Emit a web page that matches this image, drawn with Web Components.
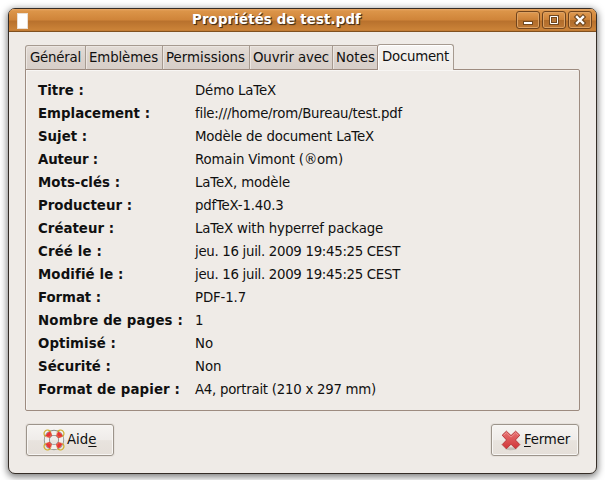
<!DOCTYPE html>
<html lang="fr"><head><meta charset="utf-8"><title>Propriétés de test.pdf</title>
<style>
html,body{margin:0;background:#fff}
body{width:605px;height:480px;overflow:hidden;font:13.33px/23px "DejaVu Sans",sans-serif;color:#101010}
</style></head><body>
<prop-window></prop-window>
<script>
const make=(name,html,init)=>customElements.define(name,class extends HTMLElement{
  connectedCallback(){
    if(this.shadowRoot)return;
    this.attachShadow({mode:'open'}).innerHTML=html;
    if(init)init(this);
  }
});

/* Text run whose tracking is tuned to fill the width given in "w". */
make('fit-text',`<style>:host{display:inline-block;white-space:pre}</style><span><slot></slot></span>`,el=>{
  const w=+el.getAttribute('w');
  if(!w)return;
  const n=[...el.textContent].length;
  const now=el.shadowRoot.querySelector('span').getBoundingClientRect().width;
  el.style.letterSpacing=((w-now)/n)+'px';
});

make('win-button',`<style>
:host{display:block;box-sizing:border-box;width:24px;height:18px;border:1px solid #70441d;border-radius:3px;background:linear-gradient(#df9a51,#cd8238 48%,#b06c2a 50%,#bd7835);box-shadow:inset 0 0 0 1px #dda263}
svg{display:block;width:22px;height:16px}
</style><svg viewBox="0 0 22 16"></svg>`,el=>{
  const k={
    min:'<path d="M6 9h10v4H6z" fill="#714820"/><path d="M7 10h8v2H7z" fill="#fff"/>',
    max:'<path d="M6 3h10v10H6z" fill="#714820"/><path d="M7.5 4.5h7v7h-7z" fill="none" stroke="#fff"/><path d="M9 6h4v4H9z" fill="#b9783a"/>',
    close:'<path d="M8 5l6 6M14 5l-6 6" stroke="#714820" stroke-width="4.6" stroke-linecap="square"/><path d="M8 5l6 6M14 5l-6 6" stroke="#fff" stroke-width="2.4" stroke-linecap="square"/>'};
  el.shadowRoot.querySelector('svg').innerHTML=k[el.getAttribute('kind')];
});

make('title-bar',`<style>
:host{display:grid;grid-template-columns:28px 1fr 80px;height:23px;box-sizing:border-box;border-bottom:1px solid #80501f;background:linear-gradient(#e8a766 0,#dc9549 2px,#cf8439 11px,#b8712d 12px,#cb8338 21px,#b97431);border-radius:5px 5px 0 0}
i{display:block;width:11px;height:16px;margin:4px 0 0 8px;box-sizing:border-box;background:#fff;border:1px solid #eadfd3}
.t{text-align:center;font-weight:bold;color:#fff;line-height:21px;text-shadow:1px 1px 1px #4a3018,1px 1px #5a3c1d}
.b{display:flex;gap:2px;padding-top:2px}
</style><i></i><div class="t"><slot></slot></div><div class="b"><win-button kind="min"></win-button><win-button kind="max"></win-button><win-button kind="close"></win-button></div>`);

make('tab-item',`<style>
:host{display:block;box-sizing:border-box;height:25px;line-height:23px;padding-left:3px;border:solid #a69a90;border-width:1px 1px 1px 0;border-bottom-color:#9d8b80;background:linear-gradient(#e3dcd6,#dbd3cd 50%,#d7cec8);box-shadow:inset 1px 1px #ece6e1}
:host([first]){padding-left:4px;border-left-width:1px;border-top-left-radius:3px}
:host([last]){border-right:0}
:host([active]){position:relative;height:26px;line-height:24px;padding-left:4px;border-bottom:0;border-left:1px solid #9d8b80;border-radius:3px 3px 0 0;background:linear-gradient(#f7f5f3,#efebe7);box-shadow:inset 1px 1px #fff}
</style><slot></slot>`);

make('prop-row',`<style>
:host{display:grid;grid-template-columns:157px 1fr;height:23px}
b{font-weight:bold}
</style><b><slot name="k"></slot></b><span><slot></slot></span>`);

make('push-button',`<style>
:host{display:flex;align-items:center;box-sizing:border-box;height:32px;border:1px solid #9c948b;border-radius:3px;background:linear-gradient(#f6f4f2,#efece9 50%,#e8e3de 52%,#e5dfd9);box-shadow:inset 0 0 0 1px #f8f6f4,0 0 0 1px #e6e1dc}
</style><slot name="icon"></slot><slot></slot>`);

make('help-icon',`<style>:host{display:block;width:22px;height:22px}svg{display:block}</style>
<svg width="22" height="22" viewBox="0 0 22 22" fill="none">
<circle cx="11" cy="11" r="7.2" stroke="#8a8a86" stroke-width="6"/>
<circle cx="11" cy="11" r="7.2" stroke="#f1f1ef" stroke-width="4.3"/>
<circle cx="11" cy="11" r="7.1" stroke="#ea3338" stroke-width="4.6" stroke-dasharray="5.2 5.95" stroke-dashoffset="-2.98"/>
<g stroke="#cfae2a" stroke-width="1.2"><path d="M7.6 2.6A3.6 3.6 0 1 0 2.6 7.6M14.4 2.6A3.6 3.6 0 1 1 19.4 7.6M7.6 19.4A3.6 3.6 0 1 1 2.6 14.4M14.4 19.4A3.6 3.6 0 1 0 19.4 14.4"/></g>
<g stroke="#d98a45" stroke-width=".8" opacity=".7"><path d="M7.6 2.6A3.6 3.6 0 0 1 2.6 7.6M14.4 2.6A3.6 3.6 0 0 0 19.4 7.6M7.6 19.4A3.6 3.6 0 0 0 2.6 14.4M14.4 19.4A3.6 3.6 0 0 1 19.4 14.4"/></g>
</svg>`);

make('close-icon',`<style>:host{display:block;width:20px;height:21px}svg{display:block}</style>
<svg width="20" height="21" viewBox="0 0 20 21">
<defs><linearGradient id="g" gradientUnits="userSpaceOnUse" x1="0" y1="1" x2="0" y2="19"><stop stop-color="#e87474"/><stop offset="1" stop-color="#cf3337"/></linearGradient></defs>
<ellipse cx="10" cy="18.8" rx="6" ry="1.5" fill="#c3bdb7"/>
<path d="M5.4 1.2 10 5.6 14.6 1.2 18.8 5.2 14.4 10 18.8 14.6 14.6 18.8 10 14.2 5.4 18.8 1.2 14.6 5.6 10 1.2 5.2z" fill="url(#g)" stroke="#b8383b" stroke-linejoin="round"/>
<path d="M2.7 5.2 5.4 2.7 10 7.1 14.6 2.7 17.3 5.2" fill="none" stroke="#f0a09e" stroke-width=".7"/>
</svg>`);

make('prop-window',`<style>
:host{display:block;padding:8px 8px 7px;height:480px;box-sizing:border-box}
.w{box-sizing:border-box;width:589px;height:466px;border:1px solid #352d27;border-radius:7px;background:#efebe7;box-shadow:0 2px 7px 1px rgba(0,0,0,.5)}
.tabs{display:grid;grid-template-columns:61px 77px 87px 83px 44px 77px;align-items:end;height:26px;margin:12px 0 0 16px}
.panel{box-sizing:border-box;width:555px;height:342px;margin:-1px 0 0 16px;border:1px solid #9d8b80;border-radius:0 2px 2px 2px;padding:9px 0 0 12px;box-shadow:inset 1px 1px #f8f6f4}
.foot{display:flex;justify-content:space-between;margin:13px 17px 0 17px}
u{text-underline-offset:2px;text-decoration-thickness:1px}
</style><div class="w">
<title-bar><fit-text w="169">Propriétés de test.pdf</fit-text></title-bar>
<div class="tabs">
<tab-item first><fit-text w="51">Général</fit-text></tab-item><tab-item><fit-text w="69">Emblèmes</fit-text></tab-item><tab-item><fit-text w="79">Permissions</fit-text></tab-item><tab-item><fit-text w="76">Ouvrir avec</fit-text></tab-item><tab-item last><fit-text w="39">Notes</fit-text></tab-item><tab-item active><fit-text w="67">Document</fit-text></tab-item>
</div>
<div class="panel"></div>
<div class="foot">
<push-button style="width:88px;padding-left:16px"><help-icon slot="icon"></help-icon><fit-text w="29.5" style="margin-left:2px;line-height:30px">Aid<u>e</u></fit-text></push-button>
<push-button style="width:88px;padding-left:9px"><close-icon slot="icon"></close-icon><fit-text w="46" style="margin-left:3px;line-height:30px"><u>F</u>ermer</fit-text></push-button>
</div></div>`,el=>{
  const rows=[
   ['Titre :',46,'Démo LaTeX',81],
   ['Emplacement :',112,'file:///home/rom/Bureau/test.pdf',207],
   ['Sujet :',49,'Modèle de document LaTeX',179],
   ['Auteur :',60,'Romain Vimont (®om)',148],
   ['Mots-clés :',82,'LaTeX, modèle',95],
   ['Producteur :',94,'pdfTeX-1.40.3',88.5],
   ['Créateur :',76,'LaTeX with hyperref package',188],
   ['Créé le :',64,'jeu. 16 juil. 2009 19:45:25 CEST',205],
   ['Modifié le :',85,'jeu. 16 juil. 2009 19:45:25 CEST',205],
   ['Format :',63,'PDF-1.7',51],
   ['Nombre de pages :',145,'1',0],
   ['Optimisé :',78,'No',18],
   ['Sécurité :',73,'Non',26.5],
   ['Format de papier :',142,'A4, portrait (210 x 297 mm)',181]];
  el.shadowRoot.querySelector('.panel').innerHTML=rows.map(r=>`<prop-row><fit-text slot="k" w="${r[1]}">${r[0]}</fit-text><fit-text w="${r[3]}">${r[2]}</fit-text></prop-row>`).join('');
});
</script></body></html>
